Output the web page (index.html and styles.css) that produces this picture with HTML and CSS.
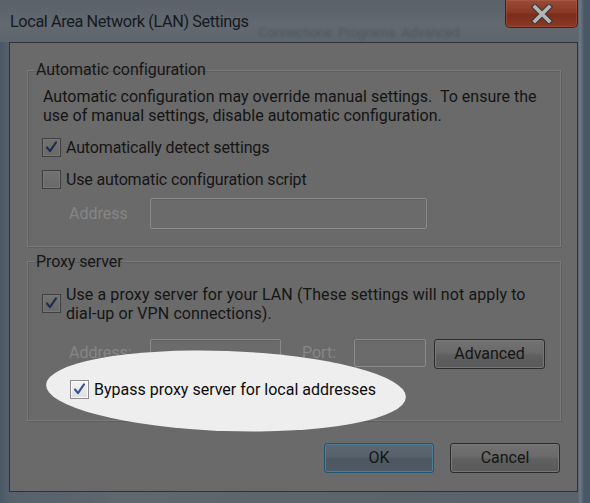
FILE: index.html
```html
<!DOCTYPE html>
<html>
<head>
<meta charset="utf-8">
<link rel="stylesheet" href="styles.css">
</head>
<body>
<div class="frame">
  <div class="titlebar">
    <span class="title">Local Area Network (LAN) Settings</span>
    <span class="ghost">Connections&nbsp;&nbsp;Programs&nbsp;&nbsp;Advanced</span>
    <div class="close">
      <svg width="30" height="20" viewBox="0 0 30 20">
        <path d="M8 3 L22 17 M22 3 L8 17" stroke="#3a3a3a" stroke-width="6" stroke-linecap="square"/>
        <path d="M8 3 L22 17 M22 3 L8 17" stroke="#b4b4b4" stroke-width="3.6" stroke-linecap="square"/>
      </svg>
    </div>
  </div>
  <div class="client">
    <fieldset class="group g-auto">
      <legend>Automatic configuration</legend>
      <p class="desc">Automatic configuration may override manual settings.&nbsp; To ensure the<br>use of manual settings, disable automatic configuration.</p>
      <div class="check-row r-detect">
        <span class="cb"><svg viewBox="0 0 19 19"><path d="M4.5 9.5 L7.8 13.6 L14.5 3.8" class="tick"/></svg></span>
        <span class="lbl">Automatically detect settings</span>
      </div>
      <div class="check-row r-script">
        <span class="cb"></span>
        <span class="lbl">Use automatic configuration script</span>
      </div>
      <div class="field-row r-addr1">
        <span class="dis lbl-addr">Address</span>
        <span class="textbox tb-auto"></span>
      </div>
    </fieldset>

    <fieldset class="group g-proxy">
      <legend>Proxy server</legend>
      <div class="check-row r-proxy">
        <span class="cb"><svg viewBox="0 0 19 19"><path d="M4.5 9.5 L7.8 13.6 L14.5 3.8" class="tick"/></svg></span>
        <span class="lbl">Use a proxy server for your LAN (These settings will not apply to<br>dial-up or VPN connections).</span>
      </div>
      <div class="field-row r-addr2">
        <span class="dis lbl-addr">Address:</span>
        <span class="textbox tb-addr"></span>
        <span class="dis lbl-port">Port:</span>
        <span class="textbox tb-port"></span>
        <span class="btn btn-adv">Advanced</span>
      </div>
      <div class="spot-wrap">
        <div class="spot"></div>
        <div class="check-row r-bypass">
          <span class="cb light"><svg viewBox="0 0 19 19"><path d="M4.5 9.5 L7.8 13.6 L14.5 3.8" class="tick"/></svg></span>
          <span class="lbl">Bypass proxy server for local addresses</span>
        </div>
      </div>
    </fieldset>

    <div class="buttons">
      <span class="btn btn-ok">OK</span>
      <span class="btn btn-cancel">Cancel</span>
    </div>
  </div>
</div>
</body>
</html>
```

FILE: styles.css
```css
* { box-sizing: border-box; }
html, body { margin: 0; padding: 0; }
body {
  width: 590px;
  height: 503px;
  overflow: hidden;
  background: #4b5866;
  font-family: Roboto, "Open Sans", "DejaVu Sans", sans-serif;
  color: #1a1a1a;
}
.frame {
  width: 590px;
  height: 503px;
  padding: 0 12px 0 9px;
  background: linear-gradient(90deg, #4a5765 0px, #56616c 9px, #5f676f 120px, #5b636b 400px, #5a636c 578px, #6d7a86 580px, #4a5866 584px);
  display: flex;
  flex-direction: column;
}
.titlebar {
  height: 42px;
  display: flex;
  align-items: flex-start;
  background: linear-gradient(180deg, #5a6169 0%, #626970 60%, #5d656d 100%);
  margin: 0 0 0 -9px;
  padding-left: 10px;
}
.title {
  flex: none;
  white-space: nowrap;
  font-size: 16.3px;
  line-height: 24px;
  margin-top: 10px;
  color: #151a1f;
  letter-spacing: -0.4px;
}
.ghost {
  flex: none;
  font-size: 13.5px;
  margin-top: 24px;
  margin-left: 10px;
  color: #50585f;
  letter-spacing: -0.2px;
  filter: blur(0.8px);
  white-space: nowrap;
}
.close {
  flex: none;
  margin-left: auto;
  width: 73px;
  height: 28px;
  border: 1px solid #3b2420;
  border-top: none;
  border-radius: 0 0 5px 5px;
  background: linear-gradient(180deg, #9a4a36 0%, #8a3926 45%, #7b2c1b 55%, #8c3a27 100%);
  display: flex;
  align-items: center;
  justify-content: center;
  box-shadow: inset 0 0 0 1px rgba(200,120,100,0.25);
}
.close svg { display: block; }

.client {
  height: 450px;
  background: #6a6a6a;
  border: 1px solid #2f3133;
  padding: 17px 17px 0 17px;
  display: flex;
  flex-direction: column;
  font-size: 16px;
  line-height: 19px;
  letter-spacing: 0;
}

.group {
  margin: 0;
  padding: 0 15px 0 14px;
  border: 1px solid #7b7b7b;
  box-shadow: inset 1px 1px 0 #5d5d5d, 1px 1px 0 #5d5d5d;
  width: 534px;
}
.group legend {
  padding: 0 1px;
  margin-left: -7px;
  font-size: 16px;
  line-height: 20px;
  letter-spacing: -0.1px;
  color: #161616;
}
.g-auto { padding-bottom: 17px; }
.g-proxy { margin-top: 5px; padding-bottom: 21px; }

.desc {
  margin: 8px -20px 0 1px;
  line-height: 18.8px;
  color: #141414;
  white-space: nowrap;
}

.check-row {
  display: flex;
  align-items: center;
  gap: 5px;
}
.cb {
  flex: none;
  width: 19px;
  height: 19px;
  border: 1px solid #3f3f3f;
  background: linear-gradient(180deg, #727272 0%, #696969 100%);
  box-shadow: inset 0 0 0 1px #777;
}
.cb svg { display: block; width: 17px; height: 17px; }
.tick {
  fill: none;
  stroke: #1f2c4e;
  stroke-width: 2.4;
  stroke-linecap: round;
  stroke-linejoin: round;
}
.cb.light {
  border-color: #8e8e8e;
  background: linear-gradient(180deg, #f6f6f6 0%, #dedede 100%);
  box-shadow: inset 0 0 0 1px #fafafa;
}
.cb.light .tick { stroke: #3a5597; }

.lbl { color: #151515; white-space: nowrap; }
.r-detect { margin-top: 12px; height: 19px; letter-spacing: -0.15px; }
.r-script { margin-top: 13px; height: 19px; letter-spacing: -0.15px; }

.field-row {
  display: flex;
  align-items: flex-start;
}
.dis { color: #868686; }
.lbl-addr { padding-left: 27px; width: 108px; flex: none; }
.r-addr1 { margin-top: 9px; align-items: center; }
.textbox {
  display: block;
  flex: none;
  border: 1px solid #8b8b8b;
  border-radius: 2px;
  background: #6b6b6b;
  box-shadow: inset 0 1px 0 #626262;
}
.tb-auto { width: 277px; height: 31px; }

.r-proxy { margin-top: 13px; letter-spacing: 0.1px; }
.r-addr2 { margin-top: 16px; height: 30px; }
.r-addr2 .dis { margin-top: 4px; }
.tb-addr { width: 131px; height: 27px; }
.lbl-port { margin-left: 21px; width: 52px; flex: none; }
.tb-port { width: 72px; height: 28px; }
.btn {
  display: flex;
  align-items: center;
  justify-content: center;
  flex: none;
  border: 1px solid #2c2c2c;
  border-radius: 3px;
  background: linear-gradient(180deg, #727272 0%, #6a6a6a 45%, #5f5f5f 55%, #5a5a5a 100%);
  box-shadow: inset 0 0 0 1px #777;
  color: #151515;
}
.btn-adv { margin-left: 8px; width: 111px; height: 30px; }

.spot-wrap {
  position: relative;
  margin-top: 11px;
}
.spot {
  position: absolute;
  left: 4px;
  top: -29px;
  width: 360px;
  height: 80px;
  border-radius: 50%;
  background: #eeeeee;
  transform: rotate(2deg);
}
.r-bypass {
  position: relative;
  padding-left: 28px;
  height: 19px;
}
.r-bypass .lbl { color: #0c0c0c; }

.buttons {
  display: flex;
  justify-content: flex-end;
  gap: 16px;
  margin-top: 22px;
}
.btn-ok, .btn-cancel { width: 110px; height: 30px; }
.btn-ok {
  border-color: #1d5670;
  background: linear-gradient(180deg, #5c6770 0%, #56616b 45%, #4c5761 55%, #4f5a64 100%);
  box-shadow: inset 0 0 0 1px #4f7f95;
}
```
